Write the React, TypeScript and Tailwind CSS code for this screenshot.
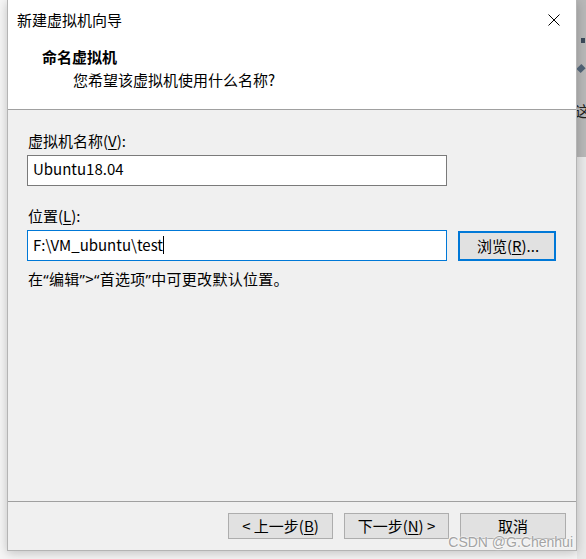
export default function App() {
  const q = "font-['Noto_Sans',sans-serif]";
  return (
    <div className="w-[586px] h-[559px] overflow-hidden flex bg-[#f6f6f6] font-['Noto_Sans_CJK_SC',sans-serif] text-[15px] leading-[20px] text-black">
      {/* left shadow gap */}
      <div className="w-[7px] shrink-0" />

      {/* Dialog window */}
      <div className="relative w-[570px] h-[551px] shrink-0 flex flex-col bg-[#f0f0f0] border border-[#b4b4b4] border-t-0 shadow-[0_2px_10px_rgba(0,0,0,0.22)]">
        {/* Title bar */}
        <div className="h-[39px] bg-white flex items-center justify-between pl-[9px] pr-[15px]">
          <span>新建虚拟机向导</span>
          <svg width="12" height="12" viewBox="0 0 12 12" className="mr-[1px]">
            <path d="M0.5 0.5 L11.5 11.5 M11.5 0.5 L0.5 11.5" stroke="#000" strokeWidth="1" fill="none" />
          </svg>
        </div>

        {/* Header */}
        <div className="h-[71px] bg-white border-b border-[#a0a0a0] flex flex-col">
          <div className="pl-[34px] mt-[8px] font-bold">命名虚拟机</div>
          <div className="pl-[65px] mt-[3px]">您希望该虚拟机使用什么名称?</div>
        </div>

        {/* Body */}
        <div className="flex-1 flex flex-col px-[19px]">
          <div className="mt-[21px] pl-[1px]">
            虚拟机名称(<span className="underline underline-offset-2">V</span>):
          </div>
          <div className="mt-[4px] w-[420px] h-[31px] bg-white border border-[#7a7a7a] flex items-center px-[5px] pb-[3px]">
            Ubuntu18.04
          </div>

          <div className="mt-[20px] pl-[1px]">
            位置(<span className="underline underline-offset-2">L</span>):
          </div>
          <div className="mt-[4px] flex items-center gap-[11px]">
            <div className="w-[420px] h-[31px] bg-white border border-[#0078d7] flex items-center px-[5px] pb-[2px]">
              <span>F:\VM_ubuntu\test</span>
              <span className="w-px h-[18px] bg-black" />
            </div>
            <button className="w-[98px] h-[30px] bg-[#e1e1e1] border-2 border-[#0078d7] flex items-center justify-center pl-[2px]">
              浏览(<span className="underline underline-offset-2">R</span>)...
            </button>
          </div>

          <div className="mt-[8px] pl-[1px] tracking-[0.3px]">
            在<span className={q}>“</span>编辑<span className={q}>”</span>&gt;<span className={q}>“</span>首选项<span className={q}>”</span>中可更改默认位置。
          </div>
        </div>

        {/* Footer */}
        <div className="h-[49px] border-t border-[#a0a0a0] flex justify-end items-start pt-[11px] pr-[10px] gap-[11px]">
          <button className="w-[105px] h-[26px] bg-[#e1e1e1] border border-[#adadad] flex items-center justify-center">
            &lt; 上一步(<span className="underline underline-offset-2">B</span>)
          </button>
          <button className="w-[105px] h-[26px] bg-[#e1e1e1] border border-[#adadad] flex items-center justify-center">
            下一步(<span className="underline underline-offset-2">N</span>) &gt;
          </button>
          <button className="w-[106px] h-[26px] bg-[#e1e1e1] border border-[#adadad] flex items-center justify-center">
            取消
          </button>
        </div>

        {/* Watermark */}
        <span className="absolute right-[3px] bottom-[0px] font-['Liberation_Sans',sans-serif] text-[14px] leading-[16px] text-[#a3a3a3] [text-shadow:0_0_2px_#fff,0_0_2px_#fff]">
          CSDN @G.Chenhui
        </span>
      </div>

      {/* Background window strip */}
      <div className="flex-1 flex flex-col overflow-hidden">
        <div className="h-[157px] bg-[#b8b8b8] flex flex-col items-end pr-[1px]">
          <div className="mt-[38px] w-[4px] h-[5px] bg-[#3c4a5a]" />
          <div className="mt-[22px] w-[6px] h-[7px] bg-[#4f6072] rotate-45 mr-[1px]" />
          <div className="mt-[30px] -ml-[2px] text-[15px] leading-[18px] text-[#222] self-start">这</div>
        </div>
        <div className="flex-1 bg-[#e9e9e9]" />
      </div>
    </div>
  );
}
